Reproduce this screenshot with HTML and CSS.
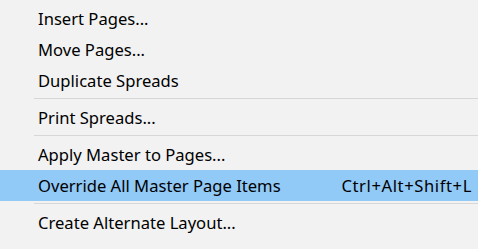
FILE: index.html
```html
<!DOCTYPE html>
<html lang="en">
<head>
  <meta charset="UTF-8" />
  <title>Pages Menu</title>
  <link rel="stylesheet" href="styles.css">
</head>
<body>
  <ul class="menu">
    <li class="item">Insert Pages...</li>
    <li class="item">Move Pages...</li>
    <li class="item">Duplicate Spreads</li>
    <li class="sep"></li>
    <li class="item">Print Spreads...</li>
    <li class="sep"></li>
    <li class="item">Apply Master to Pages...</li>
    <li class="item active">Override All Master Page Items <span class="key">Ctrl+Alt+Shift+L</span></li>
    <li class="sep"></li>
    <li class="item">Create Alternate Layout...</li>
  </ul>
</body>
</html>
```

FILE: styles.css
```css
body {
  margin: 0;
  background: #f2f2f2;
  font-family: "Noto Sans", sans-serif;
  font-size: 16.6px;
  color: #000;
}
.menu {
  list-style: none;
  margin: 0;
  padding: 3px 0 0;
}
.item {
  display: flex;
  justify-content: space-between;
  align-items: center;
  height: 31px;
  padding: 0 6px 0 38px;
}
.item.active {
  background: #91c9f7;
}
.key {
  letter-spacing: 0.6px;
}
.sep {
  height: 1px;
  background: #d7d7d7;
  margin: 2px 0 3px 34px;
}
```
